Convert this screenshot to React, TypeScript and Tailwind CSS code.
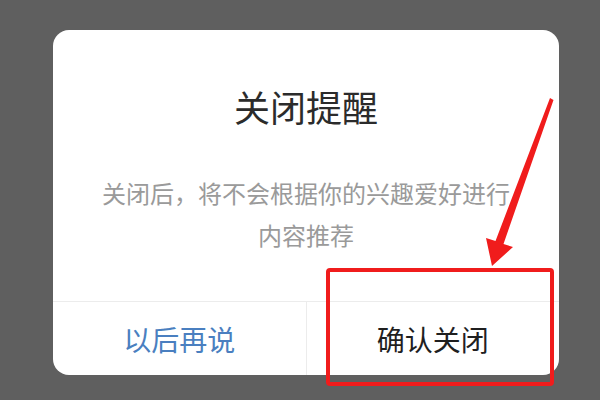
const FONT = { fontFamily: '"Noto Sans CJK SC", "Noto Sans", sans-serif' }

export default function App() {
  return (
    <div className="relative w-[600px] h-[400px] bg-[#5f5f5f] pt-[30px] pl-[53px] overflow-hidden" style={FONT}>
      {/* Dialog */}
      <div className="w-[506px] h-[345px] bg-white rounded-[16px] flex flex-col">
        <h2 className="pt-[58px] text-[36px] leading-[36px] text-center text-[#2b2b2b] font-normal">关闭提醒</h2>
        <p className="mt-[48px] px-[45px] text-[24px] leading-[42px] text-center text-[#9a9a9a]">
          关闭后，将不会根据你的兴趣爱好进行内容推荐
        </p>
        <div className="flex-1" />
        <div className="h-[74px] border-t border-[#ececec] flex">
          <button className="flex-1 flex items-center justify-center text-[28px] text-[#4a7fc0] border-r border-[#ececec]">以后再说</button>
          <button className="flex-1 flex items-center justify-center text-[28px] text-[#1f1f1f]">确认关闭</button>
        </div>
      </div>

      {/* Annotation: red box + arrow */}
      <div className="absolute left-[326px] top-[268px] w-[228px] h-[118px] border-[4px] border-[#f01c1c] rounded-[4px]" />
      <svg className="absolute left-0 top-0" width="600" height="400" viewBox="0 0 600 400">
        <polygon
          points="550,98 553.5,100 503.5,244 513,247 492,266 486,238 495.5,241"
          fill="#f01c1c"
        />
      </svg>
    </div>
  )
}
